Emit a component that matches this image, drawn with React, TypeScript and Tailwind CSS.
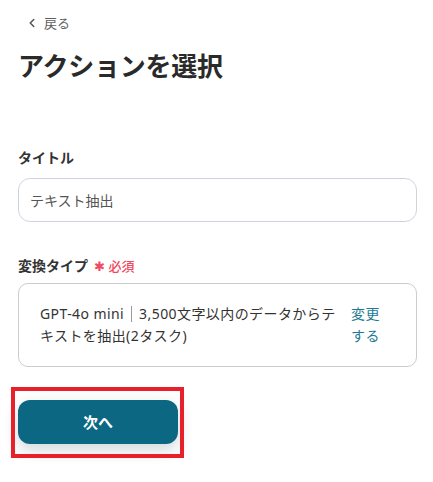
import { ChevronLeft } from 'lucide-react';

const font = { fontFamily: '"Noto Sans", "Noto Sans CJK JP", sans-serif' };

export default function App() {
  return (
    <div className="min-h-[482px] w-[433px] bg-white pl-[18px] pr-[16px] pt-[13px]" style={font}>
      <div className="flex h-5 items-center gap-[5px] pl-[7px] text-[13px] leading-5 text-[#5f5f5f]">
        <ChevronLeft size={14} strokeWidth={2.6} className="text-[#555]" />
        <span>戻る</span>
      </div>

      <h1 className="mt-[15px] text-[26px] font-bold leading-9 tracking-[-0.01em] text-[#2a2a2a]">
        アクションを選択
      </h1>

      <label className="mt-[64px] block text-[14px] font-bold leading-5 text-[#333]">タイトル</label>
      <div className="mt-[10px] flex h-[44px] items-center rounded-[12px] border border-[#cfd4dc] px-[11px] text-[14px] text-[#555]">
        テキスト抽出
      </div>

      <div className="mt-[34px] flex items-center gap-[6px] text-[14px] leading-5">
        <span className="font-bold text-[#333]">変換タイプ</span>
        <span className="text-[13px] font-medium text-[#f04a62]">✱ 必須</span>
      </div>
      <div className="mt-[7px] flex rounded-[10px] border border-[#cccccc] py-[19px] pl-[21px] pr-[21px] text-[14px] leading-[22px] tracking-[0.03em]">
        <p className="w-[296px] text-[#333]">
          GPT-4o mini
          <span className="mx-[7px] inline-block h-[16px] w-px bg-[#9a9a9a] align-[-3px]" />
          3,500文字以内のデータからテキストを抽出(2タスク)
        </p>
        <span className="ml-[15px] w-[30px] text-[#1e7a94]">変更する</span>
      </div>

      <div className="relative mt-[33px] w-[160px]">
        <button
          type="button"
          className="h-[44px] w-[160px] rounded-[12px] bg-[#0c6882] text-[15px] font-bold text-white shadow-[0_6px_16px_rgba(0,40,60,0.18)]"
        >
          次へ
        </button>
        <div className="pointer-events-none absolute -bottom-[14px] -left-[7px] -right-[6px] -top-[13px] border-4 border-[#e8202a]" />
      </div>
    </div>
  );
}
